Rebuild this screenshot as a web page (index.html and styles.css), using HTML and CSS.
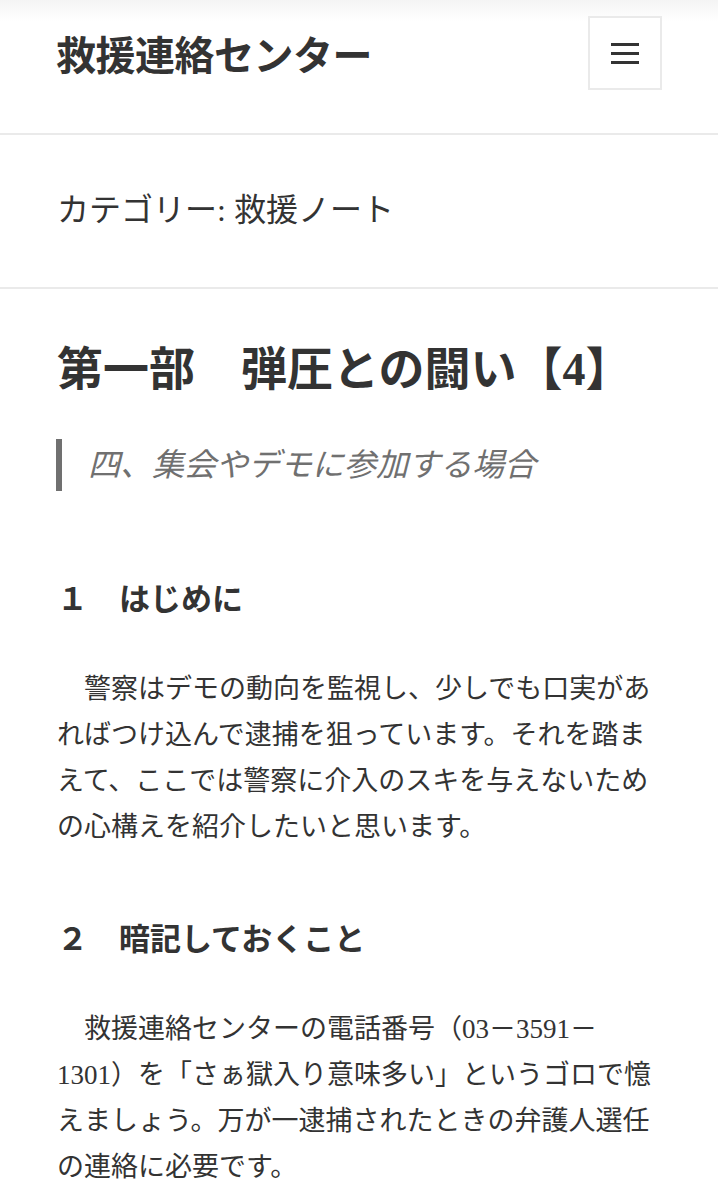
FILE: index.html
```html
<!DOCTYPE html>
<html lang="ja">
<head>
<meta charset="utf-8">
<title>救援ノート | 救援連絡センター</title>
<link rel="stylesheet" href="styles.css">
</head>
<body>
<header class="site-header">
  <p class="site-title">救援連絡センター</p>
  <button class="menu-toggle" aria-label="メニュー">
    <span class="bar"></span><span class="bar"></span><span class="bar"></span>
  </button>
</header>
<section class="page-header">
  <h1 class="page-title">カテゴリー: 救援ノート</h1>
</section>
<article class="entry">
  <h2 class="entry-title">第一部　弾圧との闘い【4】</h2>
  <blockquote class="entry-quote">四、集会やデモに参加する場合</blockquote>
  <h3 class="section-title">１　はじめに</h3>
  <p class="entry-text">　警察はデモの動向を監視し、少しでも口実があればつけ込んで逮捕を狙っています。それを踏まえて、ここでは警察に介入のスキを与えないための心構えを紹介したいと思います。</p>
  <h3 class="section-title section-title-next">２　暗記しておくこと</h3>
  <p class="entry-text">　救援連絡センターの電話番号（03－3591－1301）を「さぁ獄入り意味多い」というゴロで憶えましょう。万が一逮捕されたときの弁護人選任の連絡に必要です。</p>
</article>
</body>
</html>
```
FILE: styles.css
```css
html, body {
  margin: 0;
  padding: 0;
  background: #fff;
}
body {
  font-family: "Liberation Serif", "Noto Sans CJK JP", serif;
  color: #333;
}
.site-header {
  display: flex;
  align-items: center;
  justify-content: space-between;
  padding: 16px 56px 43px 56px;
  border-bottom: 2px solid #eaeaea;
  background: linear-gradient(#f4f4f4, #fff 22px);
}
.site-title {
  margin: 0;
  font-family: "Noto Sans CJK JP", sans-serif;
  font-weight: 700;
  font-size: 40px;
  line-height: 1.2;
  color: #333;
  letter-spacing: -0.5px;
}
.menu-toggle {
  width: 74px;
  height: 74px;
  background: #fff;
  border: 2px solid #eaeaea;
  padding: 0;
  display: flex;
  flex-direction: column;
  align-items: center;
  justify-content: center;
  gap: 6px;
}
.menu-toggle .bar {
  display: block;
  width: 28px;
  height: 3px;
  background: #333;
}
.page-header {
  padding: 55px 57px 55px 57px;
  border-bottom: 2px solid #eaeaea;
}
.page-title {
  margin: 0;
  font-size: 32px;
  font-weight: 400;
  line-height: 1.3;
}
.entry {
  padding: 52px 57px 40px 57px;
}
.entry-title {
  margin: 0;
  font-size: 46px;
  font-weight: 700;
  line-height: 57px;
}
.entry-quote {
  margin: 41px 0 0 -1px;
  padding: 0 0 0 26px;
  border-left: 6px solid #707070;
  font-size: 32px;
  font-style: italic;
  line-height: 52px;
  color: #707070;
}
.section-title {
  margin: 87px 0 0 0;
  font-size: 31px;
  font-weight: 700;
  line-height: 43px;
}
.section-title-next {
  margin-top: 68px;
}
.entry-text {
  margin: 45px 0 0 0;
  font-size: 27px;
  line-height: 46px;
}
```
